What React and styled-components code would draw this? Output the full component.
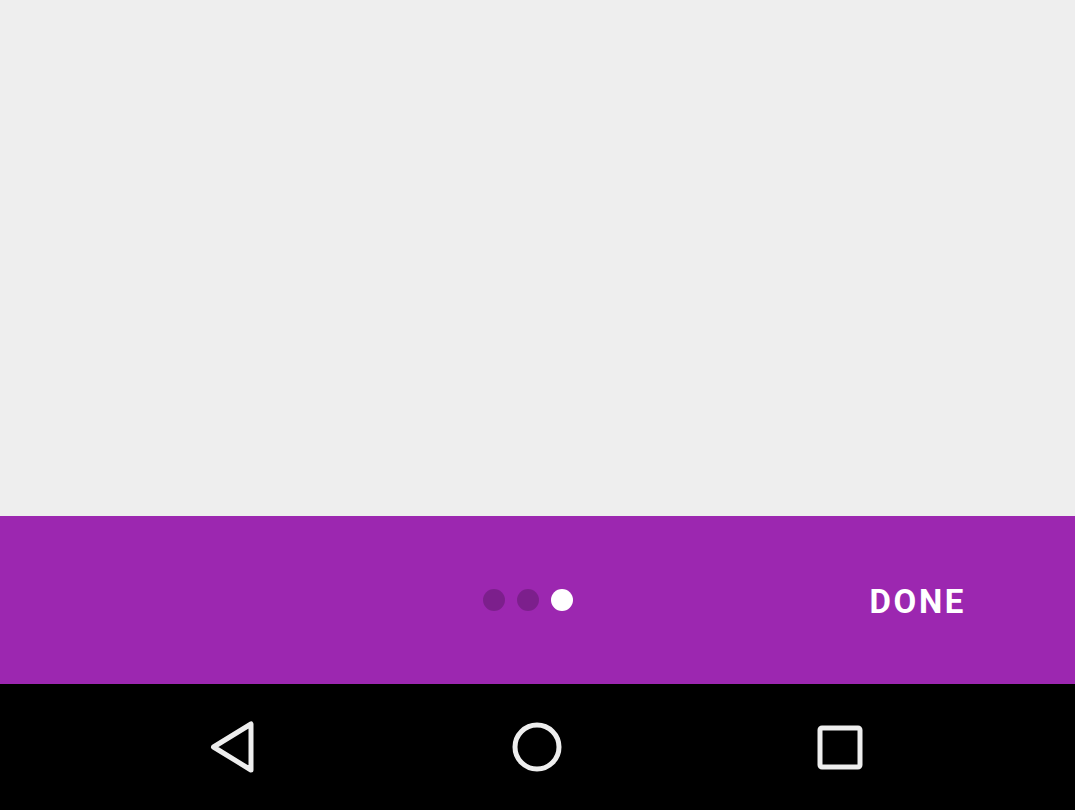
import React from "react";
import styled, { createGlobalStyle } from "styled-components";

const GlobalStyle = createGlobalStyle`
  html, body {
    margin: 0;
    padding: 0;
    height: 100%;
    background: #eeeeee;
  }
  #root {
    height: 100%;
  }
`;

const Screen = styled.div`
  display: flex;
  flex-direction: column;
  width: 1075px;
  height: 810px;
  overflow: hidden;
  font-family: Roboto, "Liberation Sans", sans-serif;
`;

const Content = styled.div`
  flex: 1;
  background: #eeeeee;
`;

const IntroBar = styled.div`
  height: 168px;
  background: #9c27b0;
  display: grid;
  grid-template-columns: 1fr auto 1fr;
  align-items: center;
`;

const Dots = styled.div`
  display: flex;
  gap: 12px;
  margin-left: -20px;
`;

const Dot = styled.span`
  width: 22px;
  height: 22px;
  border-radius: 50%;
  background: ${({ active }) => (active ? "#ffffff" : "rgba(0, 0, 0, 0.2)")};
`;

const DoneButton = styled.button`
  justify-self: end;
  margin-right: 109px;
  margin-top: 3px;
  border: none;
  background: none;
  padding: 0;
  color: #ffffff;
  font-family: Roboto, "Liberation Sans", sans-serif;
  font-weight: 700;
  font-size: 33px;
  letter-spacing: 2.6px;
  cursor: pointer;
`;

const NavBar = styled.div`
  height: 126px;
  background: #000000;
  display: flex;
  align-items: center;
  justify-content: space-between;
  padding: 0 209px 0 208px;
`;

const NavIcon = styled.svg`
  display: block;
  width: 56px;
  height: 56px;
  fill: none;
  stroke: #eeeeee;
  stroke-width: 5;
  stroke-linejoin: round;
`;

const BackIcon = () => (
  <NavIcon viewBox="0 0 56 56">
    <path d="M43 5 L43 51 L5.5 28 Z" />
  </NavIcon>
);

const HomeIcon = () => (
  <NavIcon viewBox="0 0 56 56">
    <circle cx="28" cy="28" r="22" />
  </NavIcon>
);

const RecentsIcon = () => (
  <NavIcon viewBox="0 0 56 56">
    <rect x="10" y="9" width="40" height="39" rx="2" />
  </NavIcon>
);

export default function App() {
  const pages = [0, 1, 2];
  const current = 2;

  return (
    <>
      <GlobalStyle />
      <Screen>
        <Content />
        <IntroBar>
          <span />
          <Dots>
            {pages.map((p) => (
              <Dot key={p} active={p === current} />
            ))}
          </Dots>
          <DoneButton>DONE</DoneButton>
        </IntroBar>
        <NavBar>
          <BackIcon />
          <HomeIcon />
          <RecentsIcon />
        </NavBar>
      </Screen>
    </>
  );
}
